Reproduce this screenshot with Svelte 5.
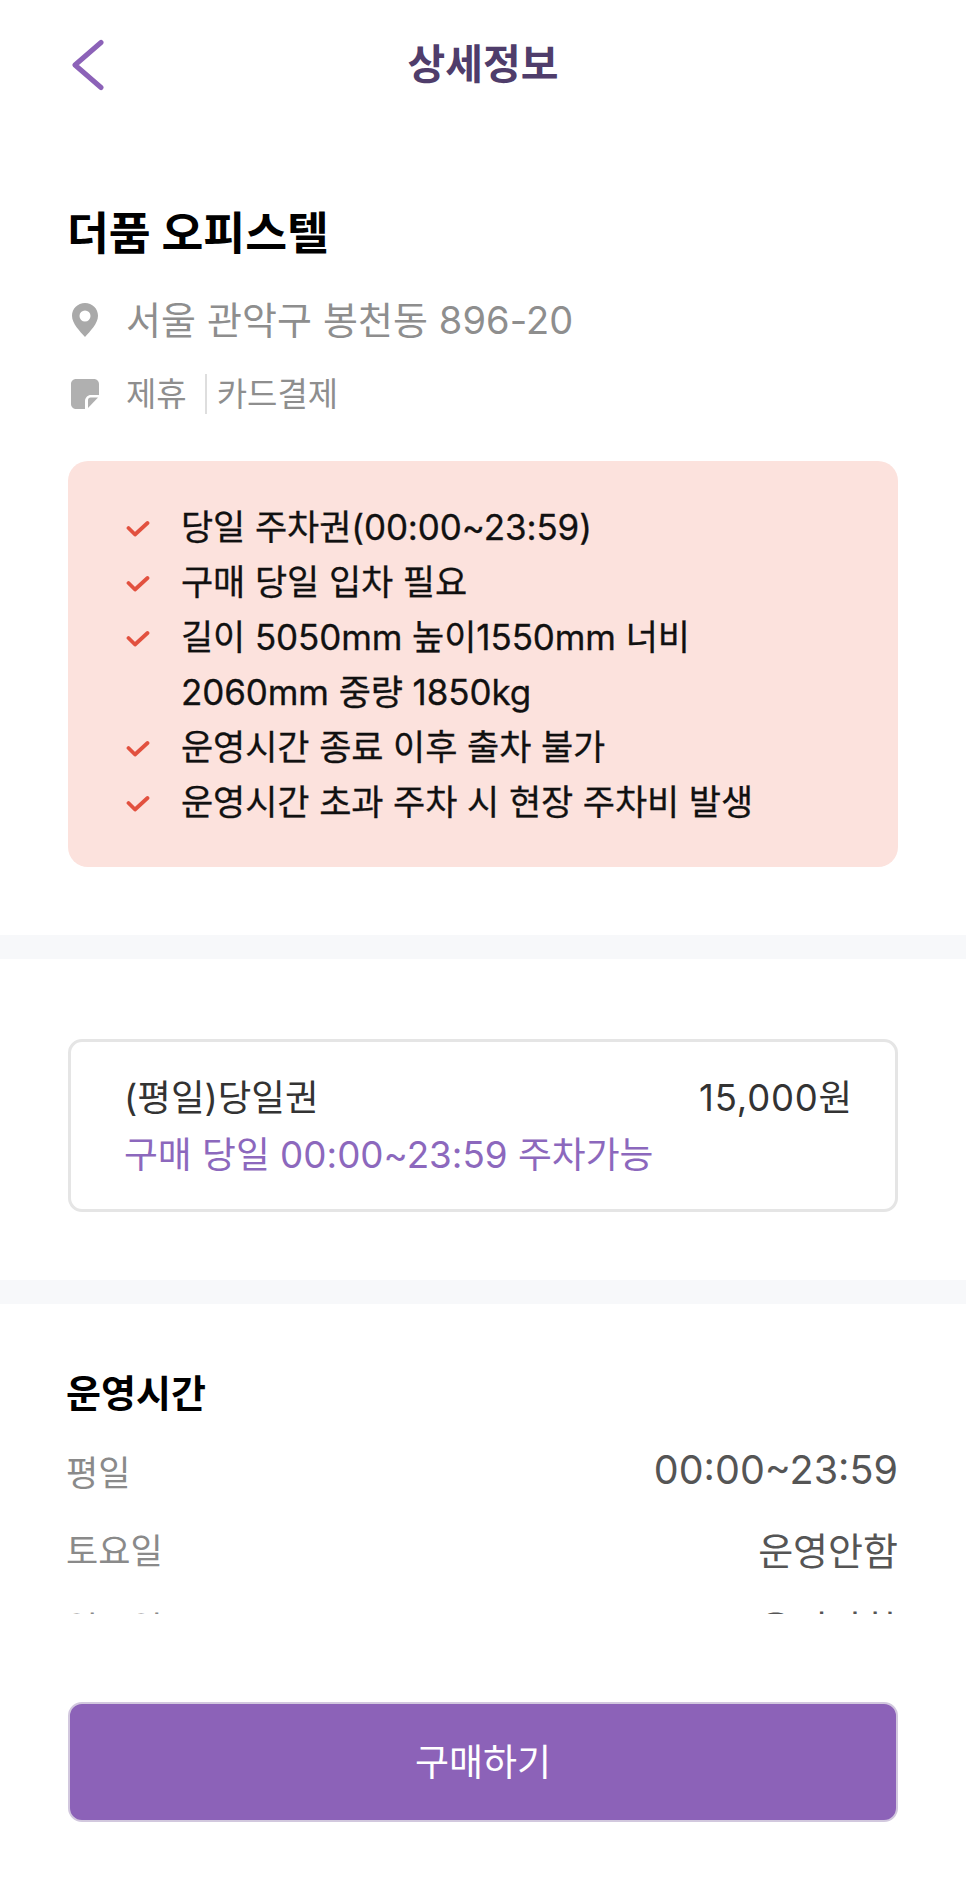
<script lang="ts">
	const notes = [
		{ text: '당일 주차권(00:00~23:59)', check: true },
		{ text: '구매 당일 입차 필요', check: true },
		{ text: '길이 5050mm 높이1550mm 너비', check: true },
		{ text: '2060mm 중량 1850kg', check: false },
		{ text: '운영시간 종료 이후 출차 불가', check: true },
		{ text: '운영시간 초과 주차 시 현장 주차비 발생', check: true }
	];

	const hours = [
		{ day: '평일', time: '00:00~23:59', closed: false },
		{ day: '토요일', time: '운영안함', closed: true },
		{ day: '일요일', time: '운영안함', closed: true }
	];
</script>

<div class="page">
	<header class="topbar">
		<button class="back" aria-label="뒤로">
			<svg width="36" height="52" viewBox="0 0 36 52" fill="none">
				<path d="M31 3.5 L5 26 L31 48.5" stroke="#8c62b8" stroke-width="5" stroke-linecap="round" stroke-linejoin="round" />
			</svg>
		</button>
		<h1>상세정보</h1>
	</header>

	<section class="info">
		<h2>더품 오피스텔</h2>
		<div class="address">
			<svg width="26" height="34" viewBox="0 0 26 34">
				<path fill-rule="evenodd" fill="#a9a9a9" d="M13 0C5.8 0 0 5.6 0 12.8C0 20.5 8 28.5 13 34C18 28.5 26 20.5 26 12.8C26 5.6 20.2 0 13 0ZM13 7.5A5.5 5.5 0 1 1 13 18.5A5.5 5.5 0 1 1 13 7.5Z" />
			</svg>
			<span>서울 관악구 봉천동 896-20</span>
		</div>
		<div class="tags">
			<svg width="28" height="30" viewBox="0 0 28 30">
				<path fill="#b0b0b0" d="M5 0H23C25.8 0 28 2.2 28 5V16H20C16.7 16 14 18.7 14 22V30H5C2.2 30 0 27.8 0 25V5C0 2.2 2.2 0 5 0Z" />
				<path fill="#b0b0b0" d="M27 18.5L17 29V21C17 19.6 18.1 18.5 19.5 18.5Z" />
			</svg>
			<span class="tag">제휴</span>
			<span class="tag divided">카드결제</span>
		</div>

		<ul class="notes">
			{#each notes as note}
				<li>
					<span class="check">
						{#if note.check}
							<svg width="24" height="18" viewBox="0 0 24 18" fill="none">
								<path d="M2.5 8L9 14.5L21.5 3" stroke="#e2513f" stroke-width="3.8" stroke-linecap="round" stroke-linejoin="round" />
							</svg>
						{/if}
					</span>
					<span>{note.text}</span>
				</li>
			{/each}
		</ul>
	</section>

	<div class="band"></div>

	<section class="ticket-wrap">
		<div class="ticket">
			<div class="ticket-row">
				<span>(평일)당일권</span>
				<span class="price">15,000원</span>
			</div>
			<p>구매 당일 00:00~23:59 주차가능</p>
		</div>
	</section>

	<div class="band"></div>

	<section class="hours">
		<h3>운영시간</h3>
		{#each hours as row}
			<div class="hour-row">
				<span class="day">{row.day}</span>
				<span class="time" class:closed={row.closed}>{row.time}</span>
			</div>
		{/each}
	</section>

	<footer class="buy-bar">
		<button class="buy">구매하기</button>
	</footer>
</div>

<style>
	:global(body) {
		margin: 0;
		background: #fff;
	}

	.page {
		position: relative;
		width: 966px;
		height: 1890px;
		overflow: hidden;
		background: #fff;
		font-family: "Inter", "Noto Sans CJK KR", sans-serif;
		color: #111;
	}

	.topbar {
		position: relative;
		display: flex;
		align-items: center;
		justify-content: center;
		height: 122px;
	}

	.back {
		position: absolute;
		left: 70px;
		top: 39px;
		padding: 0;
		background: none;
		border: none;
		line-height: 0;
	}

	h1 {
		margin: 0;
		font-size: 41px;
		font-weight: 700;
		color: #4f3d6b;
	}

	.info {
		padding: 84px 68px 68px;
	}

	h2 {
		margin: 0 0 0 -1px;
		font-size: 45.5px;
		line-height: 56px;
		font-weight: 700;
		color: #000;
	}

	.address {
		display: flex;
		align-items: center;
		gap: 28px;
		margin-top: 34px;
		padding-left: 4px;
		font-size: 38px;
		line-height: 48px;
		letter-spacing: 0.1px;
		color: #8e8e8e;
	}

	.tags {
		display: flex;
		align-items: center;
		margin-top: 30px;
		font-size: 33px;
		line-height: 40px;
		color: #8e8e8e;
	}

	.tags svg {
		margin-left: 3px;
		margin-right: 27px;
	}

	.tag.divided {
		margin-left: 18px;
		padding-left: 10px;
		border-left: 2px solid #dedede;
	}

	.notes {
		margin: 47px 0 0;
		padding: 36px 40px 40px 56px;
		list-style: none;
		background: #fce2dd;
		border-radius: 20px;
	}

	.notes li {
		display: flex;
		align-items: center;
		height: 55px;
		font-size: 35px;
		letter-spacing: -0.1px;
		color: #111;
		-webkit-text-stroke: 0.3px #111;
	}

	.check {
		display: inline-flex;
		width: 58px;
		flex-shrink: 0;
		padding-left: 2px;
		margin-right: -1px;
		box-sizing: border-box;
		transform: translateY(4px);
	}

	.band {
		height: 24px;
		background: #f7f8fa;
	}

	.ticket-wrap {
		padding: 80px 68px 68px;
	}

	.ticket {
		padding: 31px 42px 28px 53px;
		background: #fff;
		border: 3px solid #e5e5e5;
		border-radius: 14px;
	}

	.ticket-row {
		display: flex;
		justify-content: space-between;
		font-size: 36.5px;
		line-height: 50px;
		color: #333;
	}

	.price {
		letter-spacing: 0.8px;
	}

	.ticket p {
		margin: 6px 0 0;
		font-size: 36.8px;
		line-height: 52px;
		color: #8c68bd;
	}

	.hours {
		padding: 65px 68px 0 66px;
	}

	h3 {
		margin: 0 0 14px;
		font-size: 38px;
		line-height: 48px;
		font-weight: 700;
		color: #000;
	}

	.hour-row {
		display: flex;
		justify-content: space-between;
		align-items: center;
		height: 78px;
	}

	.day {
		font-size: 35px;
		color: #8a8a8a;
	}

	.time {
		font-size: 39.5px;
		color: #555;
	}

	.time.closed {
		font-size: 38px;
	}

	.buy-bar {
		position: absolute;
		left: 0;
		right: 0;
		bottom: 0;
		height: 276px;
		padding: 88px 68px 0;
		box-sizing: border-box;
		background: #fff;
	}

	.buy {
		display: block;
		width: 100%;
		height: 120px;
		padding: 0 0 4px;
		background: #8c62b8;
		border: 2px solid #d2c8de;
		border-radius: 14px;
		font-family: inherit;
		font-size: 37px;
		color: #fff;
	}
</style>
